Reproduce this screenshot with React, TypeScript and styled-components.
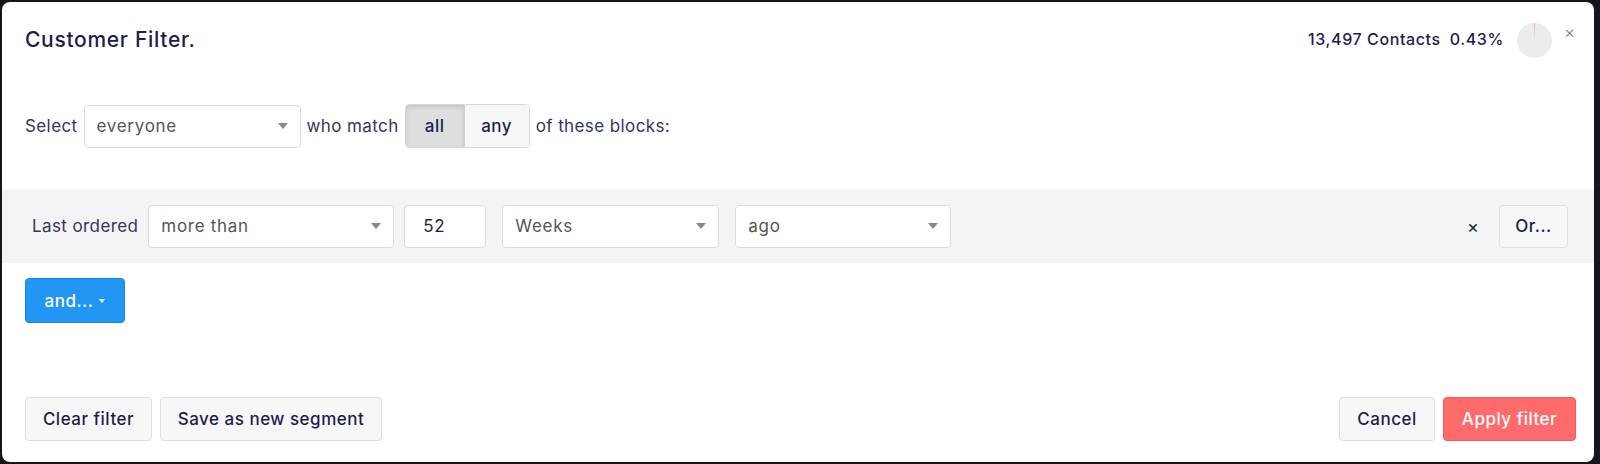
import { FC } from 'react';
import styled, { createGlobalStyle } from 'styled-components';

const GlobalStyle = createGlobalStyle`
  html, body {
    margin: 0;
    padding: 0;
    background: #15151c;
  }
  body {
    font-family: Inter, "Noto Sans", sans-serif;
    color: #22224f;
  }
`;

const Modal = styled.div`
  margin: 2px 6px 2px 2px;
  height: 460px;
  background: #fff;
  border-radius: 8px;
  display: flex;
  flex-direction: column;
  overflow: hidden;
`;

const Header = styled.div`
  height: 74px;
  padding: 0 23px;
  display: flex;
  align-items: center;
  justify-content: space-between;
`;

const Title = styled.h2`
  margin: 0;
  font-size: 21px;
  font-weight: 500;
  color: #1e1e4c;
  letter-spacing: 0.7px;
`;

const Stats = styled.div`
  display: flex;
  align-items: center;
  font-size: 16px;
  font-weight: 500;
  color: #1e1e4c;
  margin-right: -4px;
`;

const StatText = styled.span<{ gap?: number }>`
  margin-left: ${({ gap }) => gap ?? 0}px;
  letter-spacing: 0.6px;
`;

const Pie = styled.svg`
  width: 35px;
  height: 35px;
  margin-left: 13px;
  margin-top: 2px;
`;

const CloseX = styled.span`
  margin-top: -14px;
  margin-left: 12px;
  font-size: 17px;
  font-weight: 300;
  line-height: 1;
  color: #808080;
`;

const SelectRow = styled.div`
  margin-top: 28px;
  padding: 0 23px;
  display: flex;
  align-items: center;
  gap: 6px;
`;

const Label = styled.span`
  font-size: 17px;
  color: #34345f;
  letter-spacing: 0.4px;
`;

const SelectBox = styled.div<{ w: number }>`
  box-sizing: border-box;
  width: ${({ w }) => w}px;
  height: 43px;
  border: 1px solid #dcdcdc;
  border-radius: 4px;
  background: #fff;
  display: flex;
  align-items: center;
  justify-content: space-between;
  padding: 0 12px 0 12px;
  font-size: 17px;
  color: #555;
  letter-spacing: 0.7px;
`;

const Caret = styled.span`
  width: 0;
  height: 0;
  border-left: 5px solid transparent;
  border-right: 5px solid transparent;
  border-top: 6px solid #888;
`;

const Toggle = styled.div`
  display: flex;
  height: 44px;
  box-sizing: border-box;
  border: 1px solid #d6d6d6;
  border-radius: 4px;
  overflow: hidden;
`;

const ToggleOption = styled.div<{ active?: boolean; w: number }>`
  width: ${({ w }) => w}px;
  display: flex;
  align-items: center;
  justify-content: center;
  font-size: 17px;
  font-weight: 500;
  letter-spacing: 0.5px;
  color: #1e1e4c;
  background: ${({ active }) => (active ? '#dedede' : '#f7f7f7')};
  box-shadow: ${({ active }) =>
    active ? 'inset 0 2px 4px rgba(0,0,0,0.12)' : 'none'};
  border-right: ${({ active }) => (active ? '1px solid #cfcfcf' : 'none')};
`;

const Band = styled.div`
  margin-top: 41px;
  height: 74px;
  box-sizing: border-box;
  padding: 0 26px 0 30px;
  background: #f4f4f4;
  display: flex;
  align-items: center;
`;

const Spacer = styled.div`
  flex: 1;
`;

const Gap = styled.div<{ w: number }>`
  width: ${({ w }) => w}px;
  flex-shrink: 0;
`;

const NumberBox = styled.div`
  box-sizing: border-box;
  width: 82px;
  height: 43px;
  border: 1px solid #dcdcdc;
  border-radius: 4px;
  background: #fff;
  display: flex;
  align-items: center;
  padding-left: 18px;
  font-size: 17px;
  letter-spacing: 0.5px;
  color: #1e1e4c;
`;

const RemoveX = styled.span`
  font-size: 18px;
  color: #1e1e4c;
  margin-right: 20px;
`;

const Button = styled.button<{ w: number; variant?: 'default' | 'danger' | 'primary' }>`
  box-sizing: border-box;
  width: ${({ w }) => w}px;
  height: 44px;
  border-radius: 4px;
  font-family: Inter, "Noto Sans", sans-serif;
  font-size: 17px;
  font-weight: 500;
  letter-spacing: 0.5px;
  display: flex;
  align-items: center;
  justify-content: center;
  gap: 6px;
  cursor: pointer;
  border: 1px solid
    ${({ variant }) =>
      variant === 'danger' ? '#f45a5a' : variant === 'primary' ? '#1a85de' : '#dddddd'};
  background: ${({ variant }) =>
    variant === 'danger' ? '#ff6b6b' : variant === 'primary' ? '#2196f3' : '#f7f7f7'};
  color: ${({ variant }) => (variant ? '#fff' : '#1e1e4c')};
`;

const SmallCaret = styled.span`
  width: 0;
  height: 0;
  border-left: 3px solid transparent;
  border-right: 3px solid transparent;
  border-top: 4px solid #fff;
`;

const AndRow = styled.div`
  margin-top: 15px;
  padding: 0 23px;
  display: flex;
`;

const Footer = styled.div`
  margin-top: auto;
  padding: 0 18px 21px 23px;
  display: flex;
  align-items: center;
  gap: 8px;
`;

const Select: FC<{ value: string; w: number }> = ({ value, w }) => (
  <SelectBox w={w}>
    <span>{value}</span>
    <Caret />
  </SelectBox>
);

const App: FC = () => {
  return (
    <>
      <GlobalStyle />
      <Modal>
        <Header>
          <Title>Customer Filter.</Title>
          <Stats>
            <StatText>13,497 Contacts</StatText>
            <StatText gap={9}>0.43%</StatText>
            <Pie viewBox="0 0 36 36">
              <circle cx="18" cy="18" r="18" fill="#ececec" />
              <path d="M18 18 L18 0 A18 18 0 0 1 18.6 0 Z" fill="#f07a7a" />
            </Pie>
            <CloseX>×</CloseX>
          </Stats>
        </Header>

        <SelectRow>
          <Label>Select</Label>
          <Select value="everyone" w={217} />
          <Label>who match</Label>
          <Toggle>
            <ToggleOption active w={58}>all</ToggleOption>
            <ToggleOption w={64}>any</ToggleOption>
          </Toggle>
          <Label>of these blocks:</Label>
        </SelectRow>

        <Band>
          <Label>Last ordered</Label>
          <Gap w={10} />
          <Select value="more than" w={246} />
          <Gap w={10} />
          <NumberBox>52</NumberBox>
          <Gap w={16} />
          <Select value="Weeks" w={217} />
          <Gap w={16} />
          <Select value="ago" w={216} />
          <Spacer />
          <RemoveX>×</RemoveX>
          <Button w={69} style={{ height: 43 }}>Or...</Button>
        </Band>

        <AndRow>
          <Button w={100} variant="primary" style={{ height: 45 }}>
            and... <SmallCaret />
          </Button>
        </AndRow>

        <Footer>
          <Button w={127}>Clear filter</Button>
          <Button w={222}>Save as new segment</Button>
          <Spacer />
          <Button w={96}>Cancel</Button>
          <Button w={133} variant="danger">Apply filter</Button>
        </Footer>
      </Modal>
    </>
  );
};

export default App;
